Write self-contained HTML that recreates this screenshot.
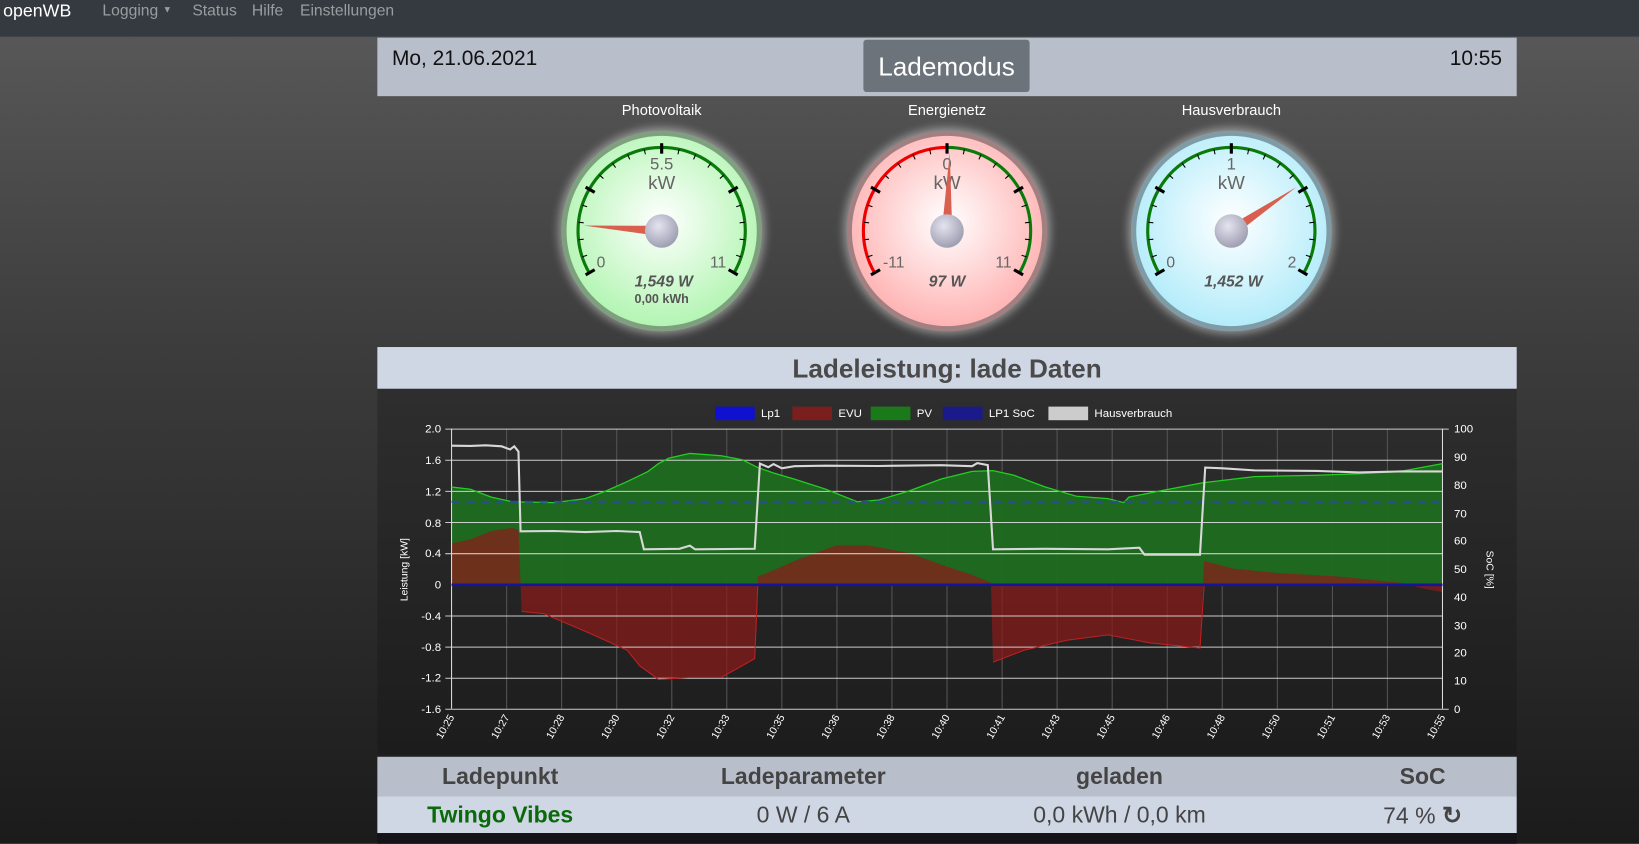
<!DOCTYPE html>
<html><head><meta charset="utf-8">
<style>
html,body{margin:0;padding:0;width:1639px;height:843px;overflow:hidden;}
body{background:linear-gradient(#3a3a3a 0px,#575757 40px,#3c3c3c 350px,#1b1b1b 843px);font-family:"Liberation Sans",sans-serif;}
#w{position:absolute;left:0;top:0;width:1568px;height:807px;transform:scale(1.04528);transform-origin:0 0;}
.nav{position:absolute;left:0;top:0;width:1568px;height:35px;background:#343a40;}
.nav span{position:absolute;top:2px;font-size:15px;color:#9a9da0;}
.hdr{position:absolute;left:361px;top:36px;width:1090px;height:56px;background:#b9becb;}
.btn{position:absolute;left:465px;top:2px;width:159px;height:50px;background:#6c737b;border-radius:3px;color:#fff;font-size:25px;text-align:center;line-height:52px;}
.gl{position:absolute;top:97px;color:#fff;font-size:14px;text-align:center;width:200px;}
.tbar{position:absolute;left:361px;top:332px;width:1090px;height:40px;background:#cfd6e4;text-align:center;font-weight:bold;font-size:25px;color:#4a4a4a;line-height:42px;}
.chart{position:absolute;left:361px;top:372px;width:1090px;height:350px;background:linear-gradient(#2e2e2e,#1c1c1c);}
.t1{position:absolute;left:361px;top:724px;width:1090px;height:38px;background:#b9becb;}
.t2{position:absolute;left:361px;top:762px;width:1090px;height:35px;background:#cfd6e4;}
.c{position:absolute;text-align:center;color:#444;}
.t1 .c{font-weight:bold;font-size:22px;top:6px;}
.t2 .c{font-size:22px;top:5px;}
.bot{position:absolute;left:361px;top:797px;width:1090px;height:10px;background:#141418;}
</style></head><body>
<div id="w">
<div class="nav">
<span style="left:3px;color:#fff;font-size:17px;top:1px">openWB</span>
<span style="left:98px">Logging <span style="position:static;font-size:9px;vertical-align:3px">▼</span></span>
<span style="left:184px">Status</span>
<span style="left:241px">Hilfe</span>
<span style="left:287px">Einstellungen</span>
</div>
<div class="hdr">
<div style="position:absolute;left:14px;top:9px;font-size:20px;color:#111">Mo, 21.06.2021</div>
<div class="btn">Lademodus</div>
<div style="position:absolute;right:14px;top:9px;font-size:20px;color:#111">10:55</div>
</div>
<div class="gl" style="left:533px">Photovoltaik</div>
<div class="gl" style="left:806px">Energienetz</div>
<div class="gl" style="left:1078px">Hausverbrauch</div>

<svg style="position:absolute;left:0;top:0" width="1568" height="330" viewBox="0 0 1568 330">
<defs>
<radialGradient id="gg" cx="0.5" cy="0.45" r="0.55"><stop offset="0" stop-color="#ffffff"/><stop offset="1" stop-color="#b3f5b3"/></radialGradient>
<radialGradient id="gr" cx="0.5" cy="0.45" r="0.55"><stop offset="0" stop-color="#ffffff"/><stop offset="1" stop-color="#ffb3b3"/></radialGradient>
<radialGradient id="gb" cx="0.5" cy="0.45" r="0.55"><stop offset="0" stop-color="#ffffff"/><stop offset="1" stop-color="#b3ecfa"/></radialGradient>
<radialGradient id="kn" cx="0.4" cy="0.35" r="0.7"><stop offset="0" stop-color="#e4e4f0"/><stop offset="1" stop-color="#9a9aae"/></radialGradient>
<filter id="gw" x="-20%" y="-20%" width="140%" height="140%"><feGaussianBlur stdDeviation="4"/></filter>
<g id="tk" stroke="#000">
<g stroke-width="3"><line x1="0" y1="-84" x2="0" y2="-74" transform="rotate(-120)"/><line x1="0" y1="-84" x2="0" y2="-74" transform="rotate(-60)"/><line x1="0" y1="-84" x2="0" y2="-74"/><line x1="0" y1="-84" x2="0" y2="-74" transform="rotate(60)"/><line x1="0" y1="-84" x2="0" y2="-74" transform="rotate(120)"/></g>
<g stroke-width="1"><line x1="0" y1="-80" x2="0" y2="-75" transform="rotate(-108)"/><line x1="0" y1="-80" x2="0" y2="-75" transform="rotate(-96)"/><line x1="0" y1="-80" x2="0" y2="-75" transform="rotate(-84)"/><line x1="0" y1="-80" x2="0" y2="-75" transform="rotate(-72)"/><line x1="0" y1="-80" x2="0" y2="-75" transform="rotate(-48)"/><line x1="0" y1="-80" x2="0" y2="-75" transform="rotate(-36)"/><line x1="0" y1="-80" x2="0" y2="-75" transform="rotate(-24)"/><line x1="0" y1="-80" x2="0" y2="-75" transform="rotate(-12)"/><line x1="0" y1="-80" x2="0" y2="-75" transform="rotate(12)"/><line x1="0" y1="-80" x2="0" y2="-75" transform="rotate(24)"/><line x1="0" y1="-80" x2="0" y2="-75" transform="rotate(36)"/><line x1="0" y1="-80" x2="0" y2="-75" transform="rotate(48)"/><line x1="0" y1="-80" x2="0" y2="-75" transform="rotate(72)"/><line x1="0" y1="-80" x2="0" y2="-75" transform="rotate(84)"/><line x1="0" y1="-80" x2="0" y2="-75" transform="rotate(96)"/><line x1="0" y1="-80" x2="0" y2="-75" transform="rotate(108)"/></g>
</g>
</defs>
<g transform="translate(633,221)">
<circle r="99" fill="#ddd" opacity="0.5" filter="url(#gw)"/>
<circle r="96" fill="#7fa07f"/>
<circle r="91" fill="url(#gg)"/>
<path d="M-69.3 40 A80 80 0 1 1 69.3 40" fill="none" stroke="#0a7a0a" stroke-width="3"/>
<use href="#tk"/>
<text x="0" y="-59" text-anchor="middle" font-size="16" fill="#666">5.5</text>
<text x="0" y="-40" text-anchor="middle" font-size="18" fill="#666">kW</text>
<text x="-58" y="35" text-anchor="middle" font-size="15" fill="#666">0</text>
<text x="54" y="35" text-anchor="middle" font-size="15" fill="#666">11</text>
<polygon points="-5,0 0,-75 5,0" fill="#d9604f" transform="rotate(-86)"/>
<circle r="16" fill="url(#kn)"/>
<text x="2" y="53" text-anchor="middle" font-size="15" font-weight="bold" font-style="italic" fill="#555">1,549 W</text>
<text x="0" y="69" text-anchor="middle" font-size="12" font-weight="bold" fill="#555">0,00 kWh</text>
</g>
<g transform="translate(906,221)">
<circle r="99" fill="#ddd" opacity="0.5" filter="url(#gw)"/>
<circle r="96" fill="#a08080"/>
<circle r="91" fill="url(#gr)"/>
<path d="M-69.3 40 A80 80 0 0 1 0 -80" fill="none" stroke="#e00" stroke-width="3"/>
<path d="M0 -80 A80 80 0 0 1 69.3 40" fill="none" stroke="#0a7a0a" stroke-width="3"/>
<use href="#tk"/>
<text x="0" y="-59" text-anchor="middle" font-size="16" fill="#666">0</text>
<text x="0" y="-40" text-anchor="middle" font-size="18" fill="#666">kW</text>
<text x="-51" y="35" text-anchor="middle" font-size="15" fill="#666">-11</text>
<text x="54" y="35" text-anchor="middle" font-size="15" fill="#666">11</text>
<polygon points="-5,0 0,-75 5,0" fill="#d9604f" transform="rotate(2)"/>
<circle r="16" fill="url(#kn)"/>
<text x="0" y="53" text-anchor="middle" font-size="15" font-weight="bold" font-style="italic" fill="#555">97 W</text>
</g>
<g transform="translate(1178,221)">
<circle r="99" fill="#ddd" opacity="0.5" filter="url(#gw)"/>
<circle r="96" fill="#7f9ca6"/>
<circle r="91" fill="url(#gb)"/>
<path d="M-69.3 40 A80 80 0 1 1 69.3 40" fill="none" stroke="#0a7a0a" stroke-width="3"/>
<use href="#tk"/>
<text x="0" y="-59" text-anchor="middle" font-size="16" fill="#666">1</text>
<text x="0" y="-40" text-anchor="middle" font-size="18" fill="#666">kW</text>
<text x="-58" y="35" text-anchor="middle" font-size="15" fill="#666">0</text>
<text x="58" y="35" text-anchor="middle" font-size="15" fill="#666">2</text>
<polygon points="-5,0 0,-75 5,0" fill="#d9604f" transform="rotate(56)"/>
<circle r="16" fill="url(#kn)"/>
<text x="2" y="53" text-anchor="middle" font-size="15" font-weight="bold" font-style="italic" fill="#555">1,452 W</text>
</g>
</svg>

<div class="tbar">Ladeleistung: lade Daten</div>
<div class="chart"></div>
<svg style="position:absolute;left:0;top:372px" width="1568" height="352" viewBox="0 372 1568 352" font-family="Liberation Sans, sans-serif">
<g font-size="11" fill="#fff">
<rect x="684" y="389" width="38" height="13" fill="#1010d0"/><text x="728" y="399">Lp1</text>
<rect x="758" y="389" width="38" height="13" fill="#7a1e1e"/><text x="802" y="399">EVU</text>
<rect x="833" y="389" width="38" height="13" fill="#1a7a1a"/><text x="877" y="399">PV</text>
<rect x="902" y="389" width="38" height="13" fill="#1a1a8a"/><text x="946" y="399">LP1 SoC</text>
<rect x="1003" y="389" width="38" height="13" fill="#ccc"/><text x="1047" y="399">Hausverbrauch</text>
</g>
<g stroke="#555" stroke-width="1">
<path d="M484.7 410V678M537.3 410V678M590 410V678M642.7 410V678M695.3 410V678M748 410V678M800.7 410V678M853.3 410V678M906 410V678M958.7 410V678M1011.3 410V678M1064 410V678M1116.7 410V678M1169.3 410V678M1222 410V678M1274.7 410V678M1327.3 410V678"/>
</g>
<path d="M432 465.9L450 468L470 475.6L490 480L530 480.8L560 477L580 469.6L600 460.7L620 451L630 443.5L640 438.3L660 433.8L690 436L710 439.8L725 447.3L740 452.5L760 458.4L790 468L820 480L840 478.5L870 469.6L900 458.4L930 451L950 450.2L970 454.7L1000 465.9L1030 474.8L1060 477L1075 480.8L1080 475.6L1110 469.6L1150 462L1200 456L1260 454.7L1300 453.2L1340 451L1380 443.5L1380 559L432 559Z" fill="#1f6b1f" opacity="0.95"/>
<path d="M432 559L432 520L450 516L470 508L490 505L496 507L499 585L520 587L560 604L600 622L612 637L630 650L660 648L690 648L710 637L722 630L725 559L725 551.5L740 545.6L760 536.7L800 521.7L830 521.7L870 529L900 540L930 550L948 557.5L950 633.5L980 622L1020 612.6L1060 607.4L1100 615L1148 620L1152 536.7L1180 544L1220 548L1280 551.5L1340 557.5L1360 562.7L1380 566.5L1380 559Z" fill="#8a1a1a" opacity="0.72"/>
<g stroke="#ddd" stroke-width="1" opacity="0.9">
<path d="M426 410.5H1386M426 440.3H1380M426 470.1H1380M426 499.9H1380M426 529.7H1380M426 589.3H1380M426 619.1H1380M426 648.9H1380M426 678.5H1386"/>
</g>
<path d="M432 410V678M1380 410V678" stroke="#ddd"/>
<path d="M432 465.9L450 468L470 475.6L490 480L530 480.8L560 477L580 469.6L600 460.7L620 451L630 443.5L640 438.3L660 433.8L690 436L710 439.8L725 447.3L740 452.5L760 458.4L790 468L820 480L840 478.5L870 469.6L900 458.4L930 451L950 450.2L970 454.7L1000 465.9L1030 474.8L1060 477L1075 480.8L1080 475.6L1110 469.6L1150 462L1200 456L1260 454.7L1300 453.2L1340 451L1380 443.5" fill="none" stroke="#22d022" stroke-width="1.2"/>
<path d="M499 585L520 587L560 604L600 622L612 637L630 650L660 648L690 648L710 637L722 630L725 559M950 633.5L980 622L1020 612.6L1060 607.4L1100 615L1148 620L1152 559" fill="none" stroke="#c02020" stroke-width="1"/>
<path d="M432 559.5H1380" stroke="#1414a0" stroke-width="2.5"/>
<path d="M432 480H1380" stroke="#2a4a9a" stroke-width="2" stroke-dasharray="8 6"/>
<path d="M432 426.4L450 426.6L465 426L480 427L488 430L492 427L496 432L498 508.3L530 508L560 509L590 508L612 509L616 525.5L650 525L660 522L665 525.5L722 525L727 443.5L735 447L740 444L748 448L760 446L790 445.5L840 445.8L900 445L930 446L935 443L945 445L950 525.5L1000 525L1060 525.5L1090 524L1095 530.7L1148 530.7L1153 447.3L1170 448L1200 450L1260 450.5L1300 452L1340 451L1380 451" fill="none" stroke="#d8d8d8" stroke-width="2"/>
<g font-size="11" fill="#fff" text-anchor="end">
<text x="422" y="414">2.0</text><text x="422" y="444">1.6</text><text x="422" y="474">1.2</text><text x="422" y="504">0.8</text><text x="422" y="533">0.4</text><text x="422" y="563">0</text><text x="422" y="593">-0.4</text><text x="422" y="623">-0.8</text><text x="422" y="652">-1.2</text><text x="422" y="682">-1.6</text>
</g>
<g font-size="11" fill="#fff">
<text x="1391" y="414">100</text><text x="1391" y="441">90</text><text x="1391" y="468">80</text><text x="1391" y="495">70</text><text x="1391" y="521">60</text><text x="1391" y="548">50</text><text x="1391" y="575">40</text><text x="1391" y="602">30</text><text x="1391" y="628">20</text><text x="1391" y="655">10</text><text x="1391" y="682">0</text>
</g>
<text transform="translate(390,545) rotate(-90)" font-size="10" fill="#fff" text-anchor="middle">Leistung [kW]</text>
<text transform="translate(1422,545) rotate(90)" font-size="10" fill="#fff" text-anchor="middle">SoC [%]</text>
<g font-size="10" fill="#fff" text-anchor="end">
<text transform="translate(435,686) rotate(-60)">10:25</text>
<text transform="translate(487.7,686) rotate(-60)">10:27</text>
<text transform="translate(540.3,686) rotate(-60)">10:28</text>
<text transform="translate(593,686) rotate(-60)">10:30</text>
<text transform="translate(645.7,686) rotate(-60)">10:32</text>
<text transform="translate(698.3,686) rotate(-60)">10:33</text>
<text transform="translate(751,686) rotate(-60)">10:35</text>
<text transform="translate(803.7,686) rotate(-60)">10:36</text>
<text transform="translate(856.3,686) rotate(-60)">10:38</text>
<text transform="translate(909,686) rotate(-60)">10:40</text>
<text transform="translate(961.7,686) rotate(-60)">10:41</text>
<text transform="translate(1014.3,686) rotate(-60)">10:43</text>
<text transform="translate(1067,686) rotate(-60)">10:45</text>
<text transform="translate(1119.7,686) rotate(-60)">10:46</text>
<text transform="translate(1172.3,686) rotate(-60)">10:48</text>
<text transform="translate(1225,686) rotate(-60)">10:50</text>
<text transform="translate(1277.7,686) rotate(-60)">10:51</text>
<text transform="translate(1330.3,686) rotate(-60)">10:53</text>
<text transform="translate(1383,686) rotate(-60)">10:55</text>
</g>
</svg>

<div class="t1">
<div class="c" style="left:0;width:235px">Ladepunkt</div>
<div class="c" style="left:270px;width:275px">Ladeparameter</div>
<div class="c" style="left:580px;width:260px">geladen</div>
<div class="c" style="left:920px;width:160px">SoC</div>
</div>
<div class="t2">
<div class="c" style="left:0;width:235px;color:#0a6a0a;font-weight:bold">Twingo Vibes</div>
<div class="c" style="left:270px;width:275px">0 W / 6 A</div>
<div class="c" style="left:570px;width:280px">0,0 kWh / 0,0 km</div>
<div class="c" style="left:920px;width:160px">74 % <b style="font-size:23px">&#x21BB;</b></div>
</div>
<div class="bot"></div>
</div>
</body></html>
